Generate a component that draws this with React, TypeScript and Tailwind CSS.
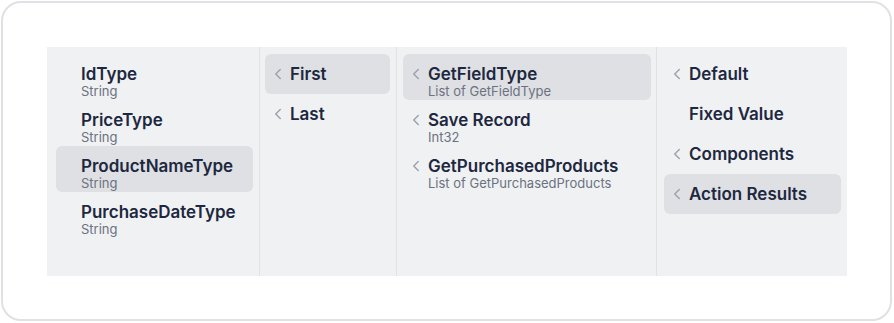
import React from 'react';

type Item = { title: string; sub?: string; chevron?: boolean; active?: boolean };

const typesCol: Item[] = [
  { title: 'IdType', sub: 'String' },
  { title: 'PriceType', sub: 'String' },
  { title: 'ProductNameType', sub: 'String', active: true },
  { title: 'PurchaseDateType', sub: 'String' },
];

const orderCol: Item[] = [
  { title: 'First', chevron: true, active: true },
  { title: 'Last', chevron: true },
];

const actionsCol: Item[] = [
  { title: 'GetFieldType', sub: 'List of GetFieldType', chevron: true, active: true },
  { title: 'Save Record', sub: 'Int32', chevron: true },
  { title: 'GetPurchasedProducts', sub: 'List of GetPurchasedProducts', chevron: true },
];

const sourceCol: Item[] = [
  { title: 'Default', chevron: true },
  { title: 'Fixed Value' },
  { title: 'Components', chevron: true },
  { title: 'Action Results', chevron: true, active: true },
];

const Chevron = () => (
  <svg width="18" height="18" viewBox="0 0 24 24" fill="none" stroke="#9ca3af" strokeWidth="2" strokeLinecap="round" strokeLinejoin="round">
    <path d="m15 18-6-6 6-6" />
  </svg>
);

function Row({ item }: { item: Item }) {
  const h = item.sub ? 'h-[46px]' : 'h-[40px]';
  return (
    <div className={`${h} ${item.active ? 'bg-[#dfe0e4]' : ''} rounded-[6px] pt-[11px] flex`}>
      <div className="w-[25px] h-[18px] flex items-center justify-center pl-[1px]">
        {item.chevron && <Chevron />}
      </div>
      <div className="flex flex-col min-w-0">
        <span className="text-[17px] leading-[18px] font-semibold text-[#1d2840] whitespace-nowrap">{item.title}</span>
        {item.sub && (
          <span className="mt-[1px] text-[13px] leading-[14px] text-[#6b7280] whitespace-nowrap">{item.sub}</span>
        )}
      </div>
    </div>
  );
}

export default function App() {
  return (
    <div className="w-[894px] h-[323px] bg-white p-[1px]" style={{ fontFamily: 'Inter, "Noto Sans", sans-serif' }}>
      <div className="w-[891px] h-[320px] border-2 border-[#e0e1e4] rounded-[20px] pt-[44px] pl-[44px]">
        <div className="w-[800px] h-[229px] bg-[#f0f1f3] flex">
          <div className="w-[213px] border-r border-[#e1e2e5] pt-[7px] pl-[9px] pr-[6px]">
            {typesCol.map((it) => <Row key={it.title} item={it} />)}
          </div>
          <div className="w-[137px] border-r border-[#e1e2e5] pt-[7px] pl-[5px] pr-[6px]">
            {orderCol.map((it) => <Row key={it.title} item={it} />)}
          </div>
          <div className="w-[260px] border-r border-[#e1e2e5] pt-[7px] pl-[6px] pr-[5px]">
            {actionsCol.map((it) => <Row key={it.title} item={it} />)}
          </div>
          <div className="flex-1 pt-[7px] pl-[7px] pr-[6px]">
            {sourceCol.map((it) => <Row key={it.title} item={it} />)}
          </div>
        </div>
      </div>
    </div>
  );
}
